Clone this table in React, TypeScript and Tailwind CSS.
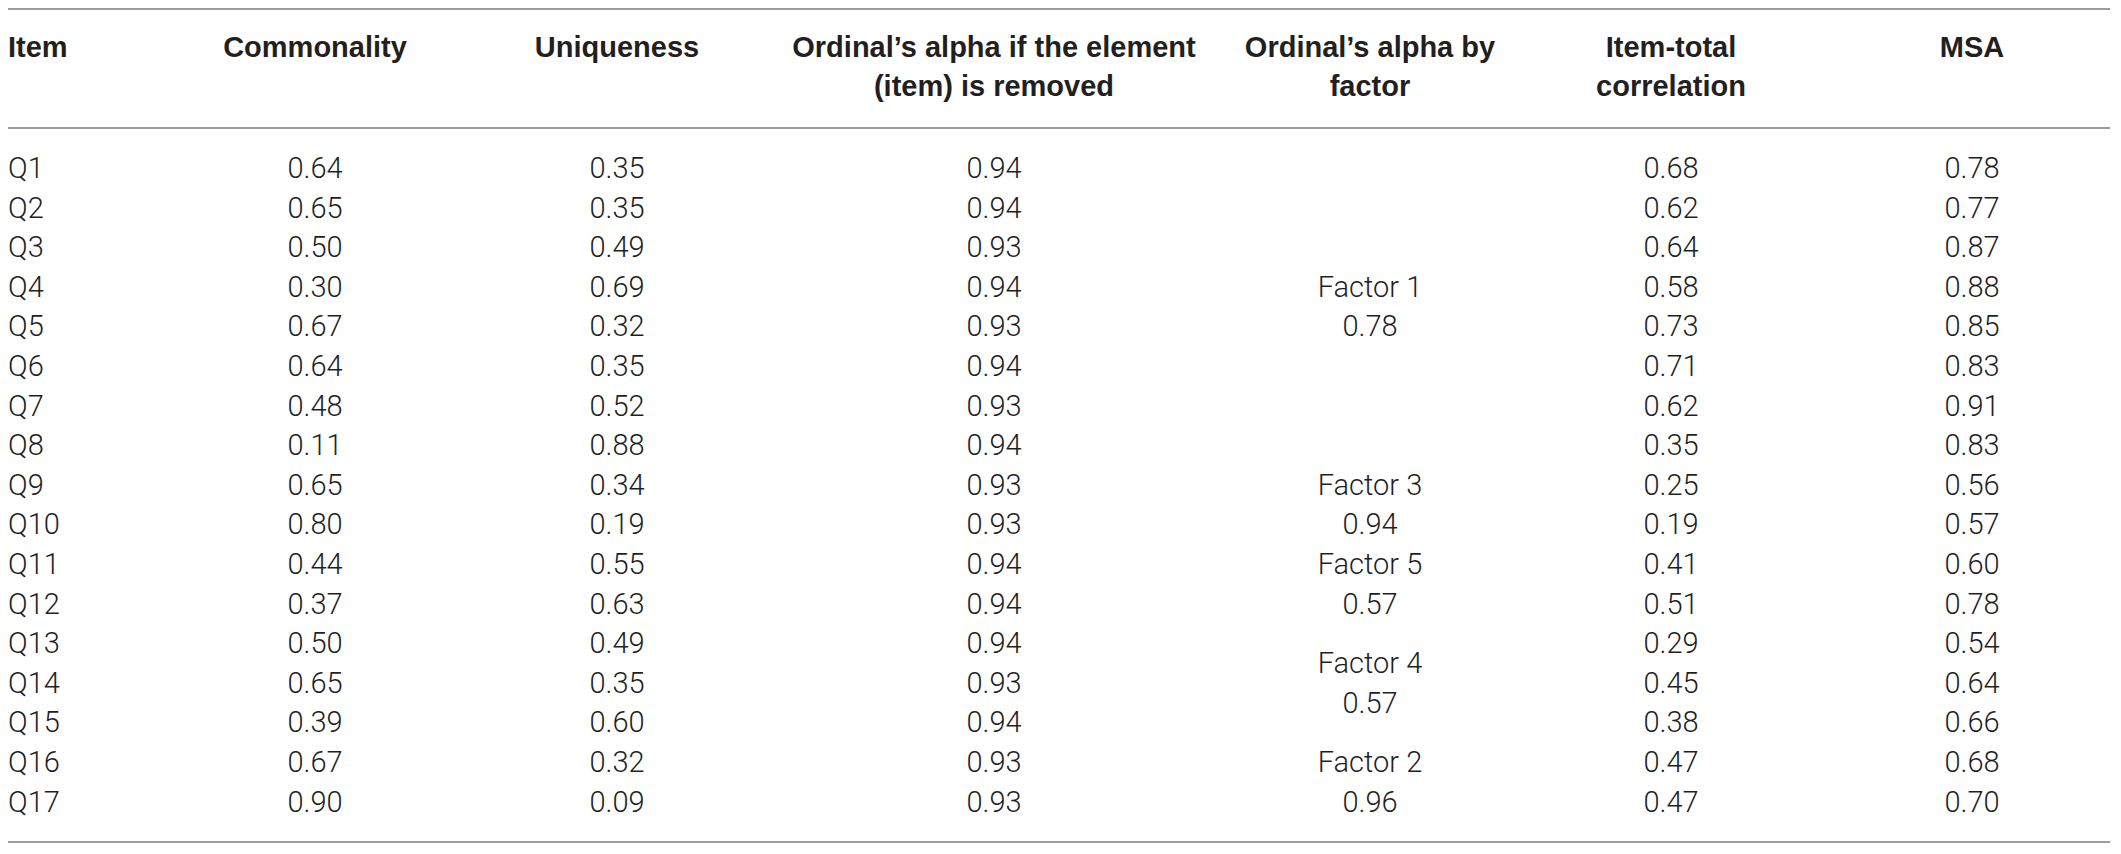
import React from "react";

type Row = {
    item: string;
    commonality: string;
    uniqueness: string;
    alphaRemoved: string;
    itemTotal: string;
    msa: string;
};

type FactorGroup = {
    start: number;
    span: number;
    label: string;
    value: string;
};

const rows: Row[] = [
    { item: "Q1", commonality: "0.64", uniqueness: "0.35", alphaRemoved: "0.94", itemTotal: "0.68", msa: "0.78" },
    { item: "Q2", commonality: "0.65", uniqueness: "0.35", alphaRemoved: "0.94", itemTotal: "0.62", msa: "0.77" },
    { item: "Q3", commonality: "0.50", uniqueness: "0.49", alphaRemoved: "0.93", itemTotal: "0.64", msa: "0.87" },
    { item: "Q4", commonality: "0.30", uniqueness: "0.69", alphaRemoved: "0.94", itemTotal: "0.58", msa: "0.88" },
    { item: "Q5", commonality: "0.67", uniqueness: "0.32", alphaRemoved: "0.93", itemTotal: "0.73", msa: "0.85" },
    { item: "Q6", commonality: "0.64", uniqueness: "0.35", alphaRemoved: "0.94", itemTotal: "0.71", msa: "0.83" },
    { item: "Q7", commonality: "0.48", uniqueness: "0.52", alphaRemoved: "0.93", itemTotal: "0.62", msa: "0.91" },
    { item: "Q8", commonality: "0.11", uniqueness: "0.88", alphaRemoved: "0.94", itemTotal: "0.35", msa: "0.83" },
    { item: "Q9", commonality: "0.65", uniqueness: "0.34", alphaRemoved: "0.93", itemTotal: "0.25", msa: "0.56" },
    { item: "Q10", commonality: "0.80", uniqueness: "0.19", alphaRemoved: "0.93", itemTotal: "0.19", msa: "0.57" },
    { item: "Q11", commonality: "0.44", uniqueness: "0.55", alphaRemoved: "0.94", itemTotal: "0.41", msa: "0.60" },
    { item: "Q12", commonality: "0.37", uniqueness: "0.63", alphaRemoved: "0.94", itemTotal: "0.51", msa: "0.78" },
    { item: "Q13", commonality: "0.50", uniqueness: "0.49", alphaRemoved: "0.94", itemTotal: "0.29", msa: "0.54" },
    { item: "Q14", commonality: "0.65", uniqueness: "0.35", alphaRemoved: "0.93", itemTotal: "0.45", msa: "0.64" },
    { item: "Q15", commonality: "0.39", uniqueness: "0.60", alphaRemoved: "0.94", itemTotal: "0.38", msa: "0.66" },
    { item: "Q16", commonality: "0.67", uniqueness: "0.32", alphaRemoved: "0.93", itemTotal: "0.47", msa: "0.68" },
    { item: "Q17", commonality: "0.90", uniqueness: "0.09", alphaRemoved: "0.93", itemTotal: "0.47", msa: "0.70" },
];

// factor cells span several rows in the "by factor" column
const factors: FactorGroup[] = [
    { start: 0, span: 8, label: "Factor 1", value: "0.78" },
    { start: 8, span: 2, label: "Factor 3", value: "0.94" },
    { start: 10, span: 2, label: "Factor 5", value: "0.57" },
    { start: 12, span: 3, label: "Factor 4", value: "0.57" },
    { start: 15, span: 2, label: "Factor 2", value: "0.96" },
];

const thBase =
    "align-top font-bold border-t-2 border-b-2 border-[#9c9c9c] pt-[18px] pb-[21px] leading-[39px]";

export default function App() {
    return (
        <div
            className="w-[2121px] h-[854px] bg-white pt-2 pl-2 text-[29px] text-[#231f20]"
            style={{ fontFamily: '"Liberation Sans", Arial, Helvetica, sans-serif' }}
        >
            <table className="table-fixed w-[2102px] border-separate border-spacing-0">
                <colgroup>
                    <col className="w-[156px]" />
                    <col className="w-[302px]" />
                    <col className="w-[302px]" />
                    <col className="w-[452px]" />
                    <col className="w-[300px]" />
                    <col className="w-[302px]" />
                    <col className="w-[288px]" />
                </colgroup>
                <thead>
                    <tr>
                        <th className={`${thBase} text-left`}>Item</th>
                        <th className={`${thBase} text-center`}>Commonality</th>
                        <th className={`${thBase} text-center`}>Uniqueness</th>
                        <th className={`${thBase} text-center`}>
                            Ordinal’s alpha if the element
                            <br />
                            (item) is removed
                        </th>
                        <th className={`${thBase} text-center`}>
                            Ordinal’s alpha by
                            <br />
                            factor
                        </th>
                        <th className={`${thBase} text-center`}>
                            Item-total
                            <br />
                            correlation
                        </th>
                        <th className={`${thBase} text-center pl-[12px]`}>MSA</th>
                    </tr>
                </thead>
                <tbody className="font-[Roboto,'Liberation_Sans',sans-serif] font-light text-[#1f1f1f]">
                    <tr className="h-[20px]">
                        <td colSpan={7} />
                    </tr>
                    {rows.map((row, i) => {
                        const factor = factors.find((f) => f.start === i);
                        return (
                            <tr key={row.item} className="h-[39.6px] leading-[39.6px]">
                                <td className="text-left">{row.item}</td>
                                <td className="text-center">{row.commonality}</td>
                                <td className="text-center">{row.uniqueness}</td>
                                <td className="text-center">{row.alphaRemoved}</td>
                                {factor && (
                                    <td rowSpan={factor.span} className="text-center align-middle">
                                        <div>{factor.label}</div>
                                        <div>{factor.value}</div>
                                    </td>
                                )}
                                <td className="text-center">{row.itemTotal}</td>
                                <td className="text-center pl-[12px]">{row.msa}</td>
                            </tr>
                        );
                    })}
                    <tr className="h-[21px]">
                        <td colSpan={7} className="border-b-2 border-[#9c9c9c]" />
                    </tr>
                </tbody>
            </table>
        </div>
    );
}
